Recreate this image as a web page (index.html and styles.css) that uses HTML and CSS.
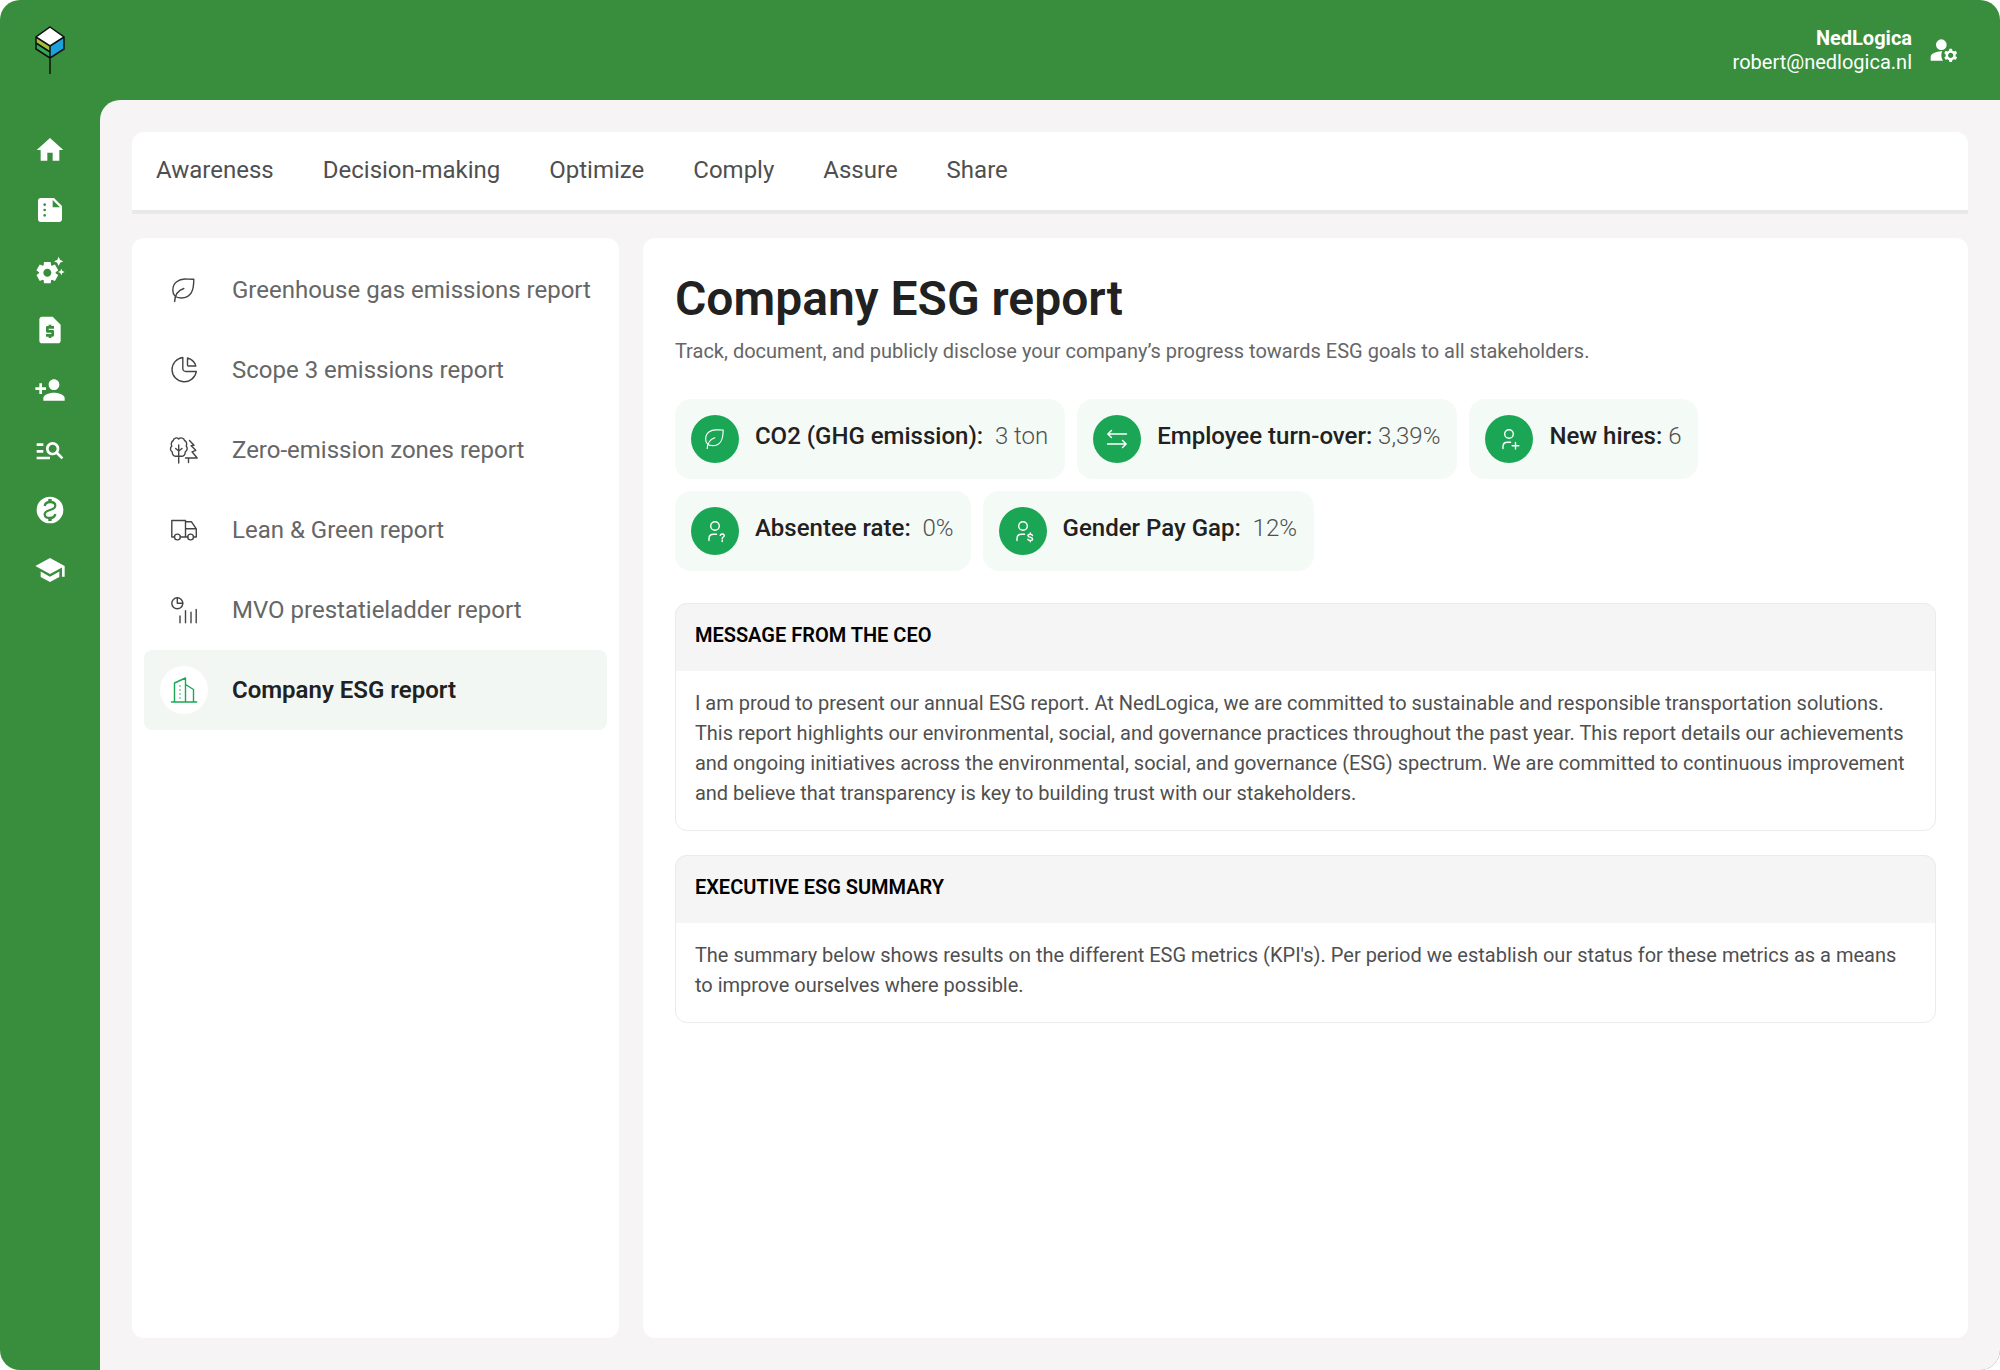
FILE: index.html
```html
<!DOCTYPE html>
<html lang="en">
<head>
<meta charset="utf-8">
<meta name="viewport" content="width=device-width, initial-scale=1">
<title>Company ESG report</title>
<link rel="stylesheet" href="styles.css">
</head>
<body>
<svg class="defs" aria-hidden="true">
  <symbol id="leaf" viewBox="0 0 24 24">
    <path d="M21.8 1.2C21.8 12 19.5 20 9.2 20 3.5 20 .8 17 .8 12 .8 4.5 7 1 13 1 16 1 19 1.4 21.8 1.2Z M2.6 23.6C2.9 18 5.5 12.5 11.8 10.5"/>
  </symbol>
</svg>
<div class="app">
  <header class="topbar">
    <a class="logo" href="#" aria-label="NedLogica home">
      <svg width="32" height="50" viewBox="0 0 32 50">
        <path class="logo-top" d="M16 2 30 12 16 21 2 12Z"/>
        <path class="logo-lime" d="M2 12 16 21V26L2 17.500Z"/>
        <path class="logo-leaf" d="M2 17.500 16 26V33L2 24Z"/>
        <path class="logo-blue" d="M30 12V24L16 33V21Z"/>
        <path class="logo-line" d="M16 2 30 12V24L16 33 2 24V12ZM2 12 16 21 30 12M2 18 16 27M16 21V49"/>
      </svg>
    </a>
    <div class="account">
      <div class="account-text">
        <strong>NedLogica</strong>
        <span>robert@nedlogica.nl</span>
      </div>
      <button class="icon-button" type="button" aria-label="Manage account">
        <svg class="solid" viewBox="0 0 24 24"><circle cx="10" cy="8" r="4"/><path d="M10.67 13.020C10.450 13.010 10.230 13 10 13c-2.420 0-4.680.670-6.610 1.820C2.510 15.340 2 16.320 2 17.350V20h9.260C10.470 18.870 10 17.490 10 16c0-1.070.250-2.070.670-2.980zM20.750 16c0-.220-.030-.420-.060-.630l1.140-1.010-1-1.730-1.450.490c-.320-.270-.680-.480-1.080-.630L18 11h-2l-.300 1.490c-.400.150-.760.360-1.080.630l-1.450-.490-1 1.730 1.140 1.010c-.030.210-.060.410-.060.630s.030.420.060.630l-1.140 1.010 1 1.730 1.450-.490c.320.270.680.480 1.080.630L16 21h2l.300-1.490c.400-.150.760-.360 1.080-.630l1.450.490 1-1.730-1.140-1.010c.030-.210.060-.410.060-.630zM17 18c-1.100 0-2-.900-2-2s.900-2 2-2 2 .900 2 2-.900 2-2 2z"/></svg>
      </button>
    </div>
  </header>

  <nav class="rail" aria-label="Main">
    <a href="#" aria-label="Home"><svg class="solid" viewBox="0 0 24 24"><path d="M10 20v-6h4v6h5v-8h3L12 3 2 12h3v8z"/></svg></a>
    <a href="#" aria-label="Summary"><svg class="solid" viewBox="0 0 24 24"><path fill-rule="evenodd" d="M15 3H5C3.900 3 3 3.900 3 5v14c0 1.100.900 2 2 2h14c1.100 0 2-.900 2-2V9zM8 17a1 1 0 1 1 0-2 1 1 0 0 1 0 2zM8 13a1 1 0 1 1 0-2 1 1 0 0 1 0 2zM8 9a1 1 0 1 1 0-2 1 1 0 0 1 0 2zM14 10V4.500l5.500 5.500z"/></svg></a>
    <a href="#" aria-label="Settings"><svg class="solid" viewBox="0 0 24 24"><path d="M17.410 6.590 15 5.500l2.410-1.090L18.500 2l1.090 2.410L22 5.500l-2.410 1.090L18.500 9zM21.280 12.720 20.500 11l-.780 1.720-1.720.780 1.720.780.780 1.720.780-1.720L23 13.500zM16.240 14.370l1.940 1.470-2.500 4.330-2.240-.940c-.200.130-.420.260-.640.370L12.500 22h-5l-.300-2.410c-.220-.110-.430-.230-.640-.370l-2.240.940-2.500-4.330 1.940-1.470c-.010-.120-.010-.240-.010-.370s0-.250.010-.370l-1.940-1.470 2.500-4.330 2.240.940c.200-.130.420-.260.640-.370L7.500 6h5l.300 2.410c.220.110.430.230.640.370l2.240-.940 2.500 4.330-1.940 1.470c.010.120.010.240.010.370s0 .250-.010.360zM13 14c0-1.660-1.340-3-3-3s-3 1.340-3 3 1.340 3 3 3 3-1.340 3-3z"/></svg></a>
    <a href="#" aria-label="Quotes"><svg class="solid" viewBox="0 0 24 24"><path fill-rule="evenodd" d="M14 2H6C4.900 2 4 2.900 4 4v16c0 1.100.900 2 2 2h12c1.100 0 2-.900 2-2V8zM15 11h-4v1h3c.550 0 1 .450 1 1v3c0 .550-.450 1-1 1h-1v1h-2v-1H9v-2h4v-1h-3c-.550 0-1-.450-1-1v-3c0-.550.450-1 1-1h1V8h2v1h2z"/></svg></a>
    <a href="#" aria-label="Add person"><svg class="solid" viewBox="0 0 24 24"><path d="M15 12c2.210 0 4-1.790 4-4s-1.790-4-4-4-4 1.790-4 4 1.790 4 4 4zm-9-2V7H4v3H1v2h3v3h2v-3h3v-2zm9 4c-2.670 0-8 1.340-8 4v2h16v-2c0-2.660-5.330-4-8-4z"/></svg></a>
    <a href="#" aria-label="Search records"><svg class="solid" viewBox="0 0 24 24"><path d="M7 9H2V7h5v2zm0 3H2v2h5v-2zm13.590 7-3.830-3.830c-.800.520-1.740.830-2.760.830-2.760 0-5-2.240-5-5s2.240-5 5-5 5 2.240 5 5c0 1.020-.310 1.960-.830 2.750L22 17.590 20.590 19zM17 11c0-1.650-1.350-3-3-3s-3 1.350-3 3 1.350 3 3 3 3-1.350 3-3zM2 19h10v-2H2v2z"/></svg></a>
    <a href="#" aria-label="Finance"><svg class="solid" viewBox="0 0 24 24"><circle cx="12" cy="12" r="10"/><path class="coin" d="M8 9C8.300 7 10 6 12.200 6 14.500 6 16 7.200 16 8.800 16 10.600 14.500 11.300 12 12 9.500 12.700 8 13.400 8 15.200 8 16.800 9.500 18 11.800 18 14 18 15.700 17 16 15"/><path class="coin coin-bar" d="M12 3.800V6M12 18V20.200"/></svg></a>
    <a href="#" aria-label="Education"><svg class="solid" viewBox="0 0 24 24"><path d="M5 13.180v4L12 21l7-3.820v-4L12 17zM12 3 1 9l11 6 9-4.910V17h2V9z"/></svg></a>
  </nav>

  <div class="workspace">
    <nav class="tabs" aria-label="Sections">
      <a href="#">Awareness</a>
      <a href="#">Decision-making</a>
      <a href="#">Optimize</a>
      <a href="#">Comply</a>
      <a href="#">Assure</a>
      <a href="#">Share</a>
    </nav>

    <div class="columns">
      <nav class="reports" aria-label="Reports">
        <a class="report" href="#">
          <span class="badge"><svg class="line" width="24" height="24"><use href="#leaf"/></svg></span>
          Greenhouse gas emissions report
        </a>
        <a class="report" href="#">
          <span class="badge"><svg class="line" width="28" height="28" viewBox="0 0 28 28"><path d="M12.800 1.500A12.200 12.200 0 1 0 26.300 15.500H15.800A3 3 0 0 1 12.800 12.500ZM17.500 2A11.500 11.500 0 0 1 25.800 10H18.500A1 1 0 0 1 17.500 9Z"/></svg></span>
          Scope 3 emissions report
        </a>
        <a class="report" href="#">
          <span class="badge"><svg class="line" width="28" height="28" viewBox="0 0 28 28"><path d="M8.700 9V27M5.700 12.500 8.700 15 12 12.500M8.700 3C7 1 3.500 2 3.300 4.500 1 5.500 1 8.500 1.800 10 -.500 12 .500 15 2.300 16 2 18.500 4 20.500 6.500 20.200H11C13.500 20.500 15.500 18.500 15.200 16 17.500 14.500 17.800 12 16.200 10 17 8.500 17 5.500 14.500 4.500 14.200 2 10.500 1 8.700 3ZM19.500 4.500 24 9.300 21.200 9.800 25.800 14.300 22 15.800 27.200 22H15.500M18.500 22V26.500"/></svg></span>
          Zero-emission zones report
        </a>
        <a class="report" href="#">
          <span class="badge"><svg class="line" width="28" height="28" viewBox="0 0 28 28"><path d="M4.300 21H1.800V4.500H15.500V21H10.500M15.500 5.800H21.500L26.300 12.800V21H23.500M18 21H15.500M15.500 12.800H26"/><circle cx="7.400" cy="21" r="2.900"/><circle cx="20.600" cy="21" r="2.900"/></svg></span>
          Lean &amp; Green report
        </a>
        <a class="report" href="#">
          <span class="badge"><svg class="line" width="28" height="28" viewBox="0 0 28 28"><circle cx="7.300" cy="7.300" r="5.500"/><path d="M7.300 1.800V7.300H12.800M10 20V26.700M15.500 14.800V26.700M21 16.200V26.700M26.200 13.500V26.700"/></svg></span>
          MVO prestatieladder report
        </a>
        <a class="report report-active" href="#" aria-current="page">
          <span class="badge"><svg class="line" width="28" height="28" viewBox="0 0 28 28"><path d="M1.500 26H26.700M4.500 26V7L15.500 2V26M15.500 8.500 23.500 13.500V26"/><path class="windows" d="M10 9V24.500"/></svg></span>
          Company ESG report
        </a>
      </nav>

      <main class="content">
        <h1>Company ESG report</h1>
        <p class="lead">Track, document, and publicly disclose your company’s progress towards ESG goals to all stakeholders.</p>

        <ul class="metrics">
          <li class="metric">
            <span class="disc"><svg class="line" width="20" height="20"><use href="#leaf"/></svg></span>
            <p><b>CO2 (GHG emission):&nbsp;</b> 3 ton</p>
          </li>
          <li class="metric">
            <span class="disc"><svg class="line" width="20" height="20" viewBox="0 0 20 20"><path d="M19.500 5H.800M4.500 1.500.800 5 4.500 8.500M.500 15H19.200M15.500 11.500 19.200 15 15.500 18.500"/></svg></span>
            <p><b>Employee turn-over:</b> 3,39%</p>
          </li>
          <li class="metric">
            <span class="disc"><svg class="line" width="20" height="20" viewBox="0 0 20 20"><circle cx="10" cy="5" r="4.300"/><path d="M4 19.500V17.500C4 14.500 6 13.200 8.500 13.200H11.500M16.500 13.500V20M13.200 16.700H19.800"/></svg></span>
            <p><b>New hires:</b> 6</p>
          </li>
          <li class="metric">
            <span class="disc"><svg class="line" width="20" height="20" viewBox="0 0 20 20"><circle cx="10" cy="5" r="4.300"/><path d="M4 19.500V17.500C4 14.500 6 13.200 8.500 13.200H11.500M15.200 14.300C15.600 12.500 19.300 12.500 19.200 14.700 19.100 16 17.200 16 17.200 17.700M17.200 19.200V20.500"/></svg></span>
            <p><b>Absentee rate:&nbsp;</b> 0%</p>
          </li>
          <li class="metric">
            <span class="disc"><svg class="line" width="20" height="20" viewBox="0 0 20 20"><circle cx="10" cy="5" r="4.300"/><path d="M4 19.500V17.500C4 14.500 6 13.200 8.500 13.200H11.500M19.500 14.500C19 12.800 15 12.800 15 14.800 15 16.800 19.600 15.700 19.600 17.900 19.600 20 15.300 19.900 14.800 18.200M17.300 12V13.200M17.300 19.500V20.700"/></svg></span>
            <p><b>Gender Pay Gap:&nbsp;</b> 12%</p>
          </li>
        </ul>

        <section class="card">
          <h2>MESSAGE FROM THE CEO</h2>
          <p>I am proud to present our annual ESG report. At NedLogica, we are committed to sustainable and responsible transportation solutions. This report highlights our environmental, social, and governance practices throughout the past year. This report details our achievements and ongoing initiatives across the environmental, social, and governance (ESG) spectrum. We are committed to continuous improvement and believe that transparency is key to building trust with our stakeholders.</p>
        </section>
        <section class="card">
          <h2>EXECUTIVE ESG SUMMARY</h2>
          <p>The summary below shows results on the different ESG metrics (KPI's). Per period we establish our status for these metrics as a means to improve ourselves where possible.</p>
        </section>
      </main>
    </div>
  </div>
</div>
</body>
</html>
```
FILE: styles.css
```css
* {
  box-sizing: border-box;
}

body {
  margin: 0;
  background: #fff;
  color: #4f4f4f;
  font-family: Roboto, "Liberation Sans", sans-serif;
  font-size: 20px;
}

h1, h2, p, ul {
  margin: 0;
  padding: 0;
}

a {
  color: inherit;
  text-decoration: none;
}

svg {
  display: block;
}

.defs {
  position: absolute;
  width: 0;
  height: 0;
}

.solid {
  width: 32px;
  height: 32px;
  fill: #fff;
}

.line {
  fill: none;
  stroke: currentColor;
  stroke-width: 1.4;
  stroke-linecap: round;
  stroke-linejoin: round;
  overflow: visible;
}

.app {
  display: grid;
  grid-template: 100px 1fr / 100px minmax(0, 1fr);
  min-height: 100vh;
  overflow: hidden;
  border-radius: 20px;
  background: #388e3c;
}

/* Top bar */
.topbar {
  grid-column: 1 / -1;
  display: flex;
  align-items: center;
  justify-content: space-between;
  padding: 0 40px 0 34px;
}

.logo-top { fill: #fff; }
.logo-lime { fill: #a2c037; }
.logo-leaf { fill: #34a853; }
.logo-blue { fill: #1ba1dc; }
.logo-line {
  fill: none;
  stroke: #111;
  stroke-width: 1.5;
}

.account {
  display: flex;
  align-items: center;
  gap: 16px;
  color: #fff;
}

.account-text {
  display: flex;
  flex-direction: column;
  line-height: 24px;
  text-align: right;
}

.icon-button {
  padding: 0;
  border: 0;
  background: none;
  cursor: pointer;
}

/* Icon rail */
.rail {
  display: flex;
  flex-direction: column;
  align-items: center;
  gap: 28px;
  padding-top: 34px;
}

.coin {
  fill: none;
  stroke: #388e3c;
  stroke-width: 1.7;
}

.coin-bar {
  stroke-width: 2.6;
}

/* Workspace */
.workspace {
  display: flex;
  flex-direction: column;
  gap: 24px;
  padding: 32px;
  border-top-left-radius: 20px;
  background: #f6f4f5;
}

.tabs {
  display: flex;
  gap: 49px;
  padding: 22px 24px 24px;
  border-bottom: 4px solid #e8eae7;
  border-radius: 12px 12px 0 0;
  background: #fff;
  font-size: 24px;
  line-height: 32px;
}

.columns {
  flex: 1;
  display: flex;
  gap: 24px;
}

.reports {
  flex: none;
  padding: 12px;
  border-radius: 12px;
  background: #fff;
}

.report {
  display: flex;
  align-items: center;
  gap: 24px;
  height: 80px;
  padding: 0 16px;
  border-radius: 8px;
  color: #666;
  font-size: 24px;
}

.badge {
  display: grid;
  place-items: center;
  width: 48px;
  height: 48px;
  border-radius: 50%;
  color: #444;
}

.report-active {
  background: #f3f7f4;
  color: #212121;
  font-weight: 600;
}

.report-active .badge {
  background: #fff;
  color: #1ba655;
}

.windows {
  stroke-dasharray: 2 2;
  stroke-linecap: butt;
  opacity: 0.6;
}

/* Report content */
.content {
  flex: 1;
  min-width: 0;
  padding: 32px;
  border-radius: 12px;
  background: #fff;
}

h1 {
  color: #212121;
  font-size: 48px;
  font-weight: 600;
  line-height: 57px;
}

.lead {
  margin-top: 8px;
  color: #666;
  line-height: 32px;
}

.metrics {
  display: flex;
  flex-wrap: wrap;
  gap: 12px;
  margin: 32px 0;
  list-style: none;
}

.metric {
  display: flex;
  gap: 16px;
  padding: 16px 17px 16px 16px;
  border-radius: 16px;
  background: #f4faf6;
  color: #4f4f4f;
  font-size: 24px;
  font-weight: 300;
  line-height: 42px;
}

.metric b {
  color: #212121;
  font-weight: 500;
}

.disc {
  display: grid;
  place-items: center;
  width: 48px;
  height: 48px;
  border-radius: 50%;
  background: #1ba655;
  color: #fff;
}

.card {
  overflow: hidden;
  border-radius: 12px;
  outline: 1px solid #ebebeb;
  outline-offset: -1px;
}

.card + .card {
  margin-top: 24px;
}

.card h2 {
  padding: 16px 20px 20px;
  background: #f5f5f5;
  color: #000;
  font-size: 20px;
  font-weight: 600;
  line-height: 32px;
}

.card p {
  padding: 17px 20px 23px;
  line-height: 30px;
}
```
